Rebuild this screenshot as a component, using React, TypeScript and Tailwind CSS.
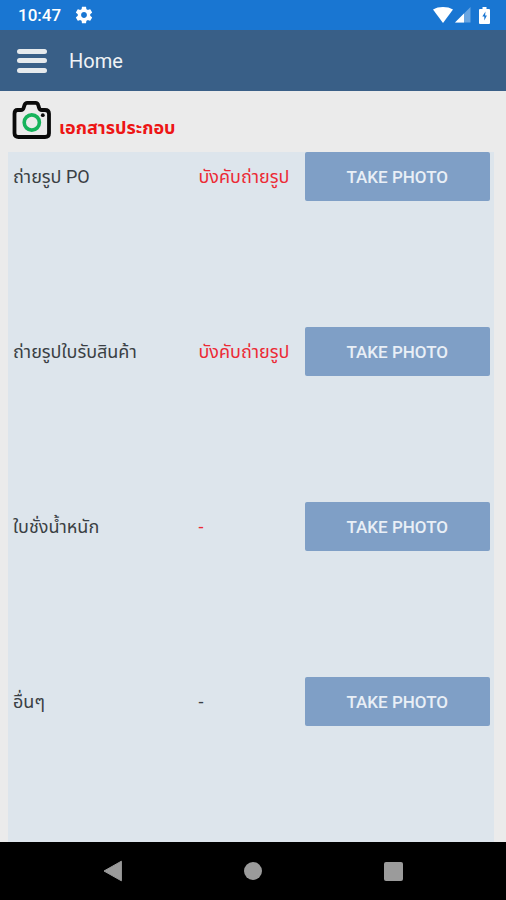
import React from 'react';

interface PhotoDocument {
  id: string;
  label: string;
  status: string;
  statusClass: string;
}

const documents: PhotoDocument[] = [
  { id: 'po', label: 'ถ่ายรูป PO', status: 'บังคับถ่ายรูป', statusClass: 'text-[#ec2a35]' },
  { id: 'receipt', label: 'ถ่ายรูปใบรับสินค้า', status: 'บังคับถ่ายรูป', statusClass: 'text-[#ec2a35]' },
  { id: 'weight', label: 'ใบชั่งน้ำหนัก', status: '-', statusClass: 'text-[#ec2a35]' },
  { id: 'other', label: 'อื่นๆ', status: '-', statusClass: 'text-[#3a3f44]' },
];

const StatusBar: React.FC = () => (
  <div className="h-[30px] shrink-0 bg-[#1976d2] flex items-center justify-between pl-[18px] pr-4 text-white">
    <div className="flex items-center gap-[13px]">
      <span className="text-[17px] leading-5 font-medium">10:47</span>
      <svg className="w-5 h-5" viewBox="0 0 24 24" fill="currentColor" aria-hidden="true">
        <path d="M19.43 12.98c.04-.32.07-.64.07-.98s-.03-.66-.07-.98l2.11-1.65c.19-.15.24-.42.12-.64l-2-3.46c-.12-.22-.39-.3-.61-.22l-2.49 1c-.52-.4-1.08-.73-1.69-.98l-.38-2.65C14.46 2.18 14.25 2 14 2h-4c-.25 0-.46.18-.49.42l-.38 2.65c-.61.25-1.17.59-1.69.98l-2.49-1c-.23-.09-.49 0-.61.22l-2 3.46c-.13.22-.07.49.12.64l2.11 1.65c-.04.32-.07.65-.07.98s.03.66.07.98l-2.11 1.65c-.19.15-.24.42-.12.64l2 3.46c.12.22.39.3.61.22l2.49-1c.52.4 1.08.73 1.69.98l.38 2.65c.03.24.24.42.49.42h4c.25 0 .46-.18.49-.42l.38-2.65c.61-.25 1.17-.59 1.69-.98l2.49 1c.23.09.49 0 .61-.22l2-3.46c.12-.22.07-.49-.12-.64l-2.11-1.65zM12 15.5c-1.93 0-3.5-1.57-3.5-3.5s1.57-3.5 3.5-3.5 3.5 1.57 3.5 3.5-1.57 3.5-3.5 3.5z" />
      </svg>
    </div>
    <div className="flex items-center" aria-hidden="true">
      <svg className="w-5 h-4 mr-[2px]" viewBox="0 0 20 16" fill="currentColor">
        <path d="M0 2.6C2.8.8 6.2 0 10 0s7.2.8 10 2.6L10 16z" />
      </svg>
      <svg className="w-4 h-4 mr-2" viewBox="0 0 16 16" fill="currentColor">
        <path d="M15.5 0v15.5H0z" opacity="0.35" />
        <path d="M9 6.5v9H0z" />
      </svg>
      <svg className="w-[11px] h-[17px]" viewBox="0 0 11 17">
        <path d="M3.5 0h4v2H10a1 1 0 0 1 1 1v13a1 1 0 0 1-1 1H1a1 1 0 0 1-1-1V3a1 1 0 0 1 1-1h2.500z" fill="currentColor" />
        <path d="M6.500 4.500 3.300 9.600h2v3.900L7.900 8.400H6.100z" fill="#1976d2" />
      </svg>
    </div>
  </div>
);

const AppHeader: React.FC = () => (
  <header className="h-[61px] shrink-0 bg-[#395f87] flex items-center gap-[22px] pl-[17px] text-[#f0f3f6]">
    <button type="button" aria-label="Menu" className="w-[30px] h-6 flex flex-col justify-between">
      <span className="w-full h-[5px] rounded-full bg-[#e6eaed]"></span>
      <span className="w-full h-[5px] rounded-full bg-[#e6eaed]"></span>
      <span className="w-full h-[5px] rounded-full bg-[#e6eaed]"></span>
    </button>
    <h1 className="text-xl leading-6">Home</h1>
  </header>
);

const CameraLogo: React.FC = () => (
  <svg className="w-10 h-10 shrink-0" viewBox="0 0 40 40" fill="none" aria-hidden="true">
    <path
      d="M5.500 10H9c1.500 0 2.200-.7 2.600-2l.9-2.800C13 3.600 13.600 2.800 15.200 2.800h8.300c1.600 0 2.400.8 2.800 2.400l.8 2.800c.4 1.300 1.200 2 2.700 2H33c2.500 0 4 1.400 4 3.800v19.400c0 2.500-1.500 3.800-4 3.800H6.500C4 37 2.500 35.700 2.500 33.200V13.800C2.500 11.400 3.500 10 5.500 10z"
      stroke="#0a0a0a"
      strokeWidth="3.800"
      strokeLinejoin="round"
    />
    <circle cx="19.800" cy="22.500" r="7.600" stroke="#16b35b" strokeWidth="3.600" />
    <circle cx="30.800" cy="15.200" r="1.900" fill="#0a0a0a" />
  </svg>
);

const DocumentRow: React.FC<{ document: PhotoDocument }> = ({ document }) => (
  <li className="h-[175px] grid grid-cols-[7fr_4fr_7fr] items-start">
    <span id={`label-${document.id}`} className="h-[49px] flex items-center text-lg leading-6 text-[#3a3f44] whitespace-nowrap">
      {document.label}
    </span>
    <span className={`h-[49px] flex items-center text-lg leading-6 whitespace-nowrap ${document.statusClass}`}>
      {document.status}
    </span>
    <button
      type="button"
      aria-describedby={`label-${document.id}`}
      className="h-[49px] rounded-xs bg-[#7f9fc6] text-[17px] leading-6 font-medium text-[#e9eff6]"
    >
      TAKE PHOTO
    </button>
  </li>
);

const NavigationBar: React.FC = () => (
  <nav className="h-[58px] shrink-0 bg-black flex items-center justify-center gap-[116px] text-[#9b9b9b]">
    <button type="button" aria-label="Back" className="w-6 h-6 flex items-center justify-center">
      <svg className="w-5 h-[22px]" viewBox="0 0 20 22" fill="currentColor">
        <path d="M18.400 1.200v19.600L1 11z" stroke="currentColor" strokeLinejoin="round" />
      </svg>
    </button>
    <button type="button" aria-label="Home" className="w-6 h-6 flex items-center justify-center">
      <span className="w-[18px] h-[18px] rounded-full bg-[#9b9b9b]"></span>
    </button>
    <button type="button" aria-label="Recent apps" className="w-6 h-6 flex items-center justify-center">
      <span className="w-[19px] h-[19px] rounded-xs bg-[#9b9b9b]"></span>
    </button>
  </nav>
);

export default function App() {
  return (
    <div className="h-screen flex flex-col bg-[#ebebeb] font-[Roboto,'Noto_Sans_Thai','Noto_Sans',sans-serif]">
      <StatusBar />
      <AppHeader />
      <main className="flex-1 min-h-0 flex flex-col">
        <div className="h-[61px] shrink-0 flex items-center gap-[7px] pl-3 pb-1">
          <CameraLogo />
          <h2 className="pt-4 text-lg leading-6 font-bold text-[#ed1515]">เอกสารประกอบ</h2>
        </div>
        <ul className="flex-1 min-h-0 ml-2 mr-3 pl-[5px] pr-1 bg-[#dde5ec] overflow-y-auto [scrollbar-width:none]">
          {documents.map((document) => (
            <DocumentRow key={document.id} document={document} />
          ))}
        </ul>
      </main>
      <NavigationBar />
    </div>
  );
}
